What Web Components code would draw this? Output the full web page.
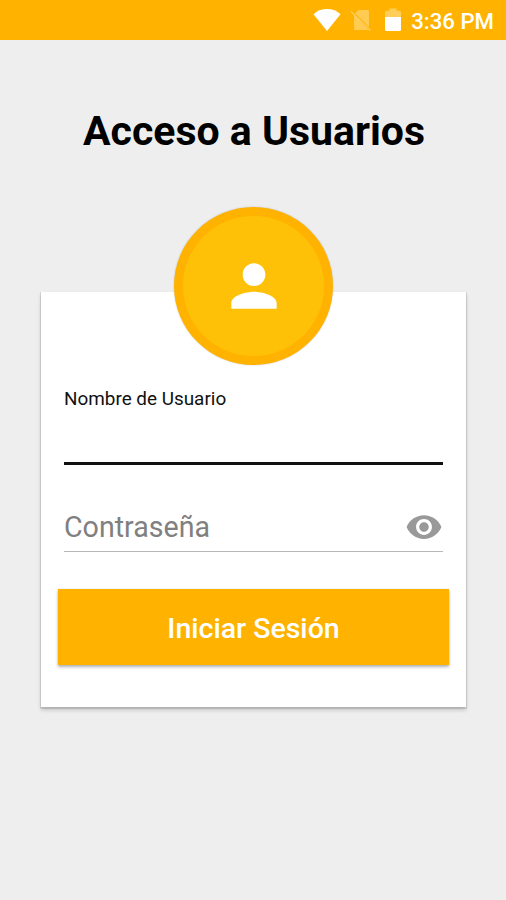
<!DOCTYPE html>
<html lang="es">
<head>
<meta charset="utf-8">
<title>Acceso a Usuarios</title>
<style>
  body {
    margin: 0;
    background: #eeeeee;
    font-family: Roboto, "Liberation Sans", sans-serif;
  }
</style>
</head>
<body>
<login-screen></login-screen>

<script>
const statusBarTemplate = document.createElement("template");

statusBarTemplate.innerHTML = `
  <svg class="wifi" width="28" height="22" viewBox="0 0 28 22">
    <path fill="#fff" d="M14 22L.5 5.300C4 1.800 8.800 0 14 0s10 1.800 13.500 5.300z"/>
  </svg>
  <svg class="sim" width="22" height="22" viewBox="0 0 22 22">
    <path fill="#fff" fill-opacity=".32" d="M8.500 1H17.500a1.500 1.500 0 0 1 1.500 1.500V18L5 4.300zM4 6L18.500 21H5.500a1.500 1.500 0 0 1-1.500-1.500z"/>
    <path stroke="#fff" stroke-opacity=".32" stroke-width="1.500" d="M.8 2.500L20.500 21.500"/>
  </svg>
  <svg class="battery" width="16" height="24" viewBox="0 0 16 24">
    <path fill="#fff" fill-opacity=".35" d="M0 9V4.200A1.500 1.500 0 0 1 1.500 2.700H4.500V.5h7V2.700h3A1.500 1.500 0 0 1 16 4.200V9z"/>
    <path fill="#fff" d="M0 9h16v12.500a1.500 1.500 0 0 1-1.500 1.500h-13A1.500 1.500 0 0 1 0 21.500z"/>
  </svg>
  <span><slot></slot></span>

  <style>
    :host {
      display: flex;
      align-items: center;
      justify-content: flex-end;
      box-sizing: border-box;
      height: 40px;
      padding-right: 12px;
      background-color: #ffb300;
      color: #fff;
    }

    .sim {
      margin-left: 9px;
    }

    .battery {
      margin: 0 10px 0 13px;
    }

    span {
      font-size: 22.200px;
      font-weight: 500;
      line-height: 38px;
      padding-top: 2px;
    }
  </style>
`;

class StatusBar extends HTMLElement {
  connectedCallback() {
    this.attachShadow({ mode: "open" });
    this.shadowRoot.appendChild(statusBarTemplate.content.cloneNode(true));
  }
}

window.customElements.define("status-bar", StatusBar);

const userAvatarTemplate = document.createElement("template");

userAvatarTemplate.innerHTML = `
  <svg width="68" height="68" viewBox="0 0 24 24">
    <path fill="#fff" d="M12 12c2.210 0 4-1.790 4-4s-1.790-4-4-4-4 1.790-4 4 1.790 4 4 4zm0 2c-2.670 0-8 1.340-8 4v2h16v-2c0-2.660-5.330-4-8-4z"/>
  </svg>

  <style>
    :host {
      display: flex;
      align-items: center;
      justify-content: center;
      box-sizing: border-box;
      width: 159px;
      height: 158px;
      border: 9px solid #ffb300;
      border-radius: 50%;
      background-color: #ffc107;
      box-shadow: 0 0 2px rgba(0, 0, 0, 0.2);
    }
  </style>
`;

class UserAvatar extends HTMLElement {
  connectedCallback() {
    this.attachShadow({ mode: "open" });
    this.shadowRoot.appendChild(userAvatarTemplate.content.cloneNode(true));
  }
}

window.customElements.define("user-avatar", UserAvatar);

const textFieldTemplate = document.createElement("template");

textFieldTemplate.innerHTML = `
  <label><slot></slot></label>
  <slot name="icon"></slot>

  <style>
    :host {
      display: flex;
      align-items: center;
      justify-content: space-between;
      box-sizing: border-box;
      height: 49px;
      border-bottom: 1.500px solid #b8b8b8;
      color: #808080;
    }

    label {
      font-size: 28.600px;
      line-height: 48px;
    }

    :host([focused]) {
      align-items: flex-start;
      height: 80px;
      border-bottom: 3px solid #111;
      color: #111;
    }

    :host([focused]) label {
      font-size: 18.900px;
      line-height: 28px;
    }
  </style>
`;

class TextField extends HTMLElement {
  connectedCallback() {
    this.attachShadow({ mode: "open" });
    this.shadowRoot.appendChild(textFieldTemplate.content.cloneNode(true));
  }
}

window.customElements.define("text-field", TextField);

const raisedButtonTemplate = document.createElement("template");

raisedButtonTemplate.innerHTML = `
  <button type="button"><slot></slot></button>

  <style>
    :host {
      display: block;
    }

    button {
      display: block;
      width: 100%;
      height: 76px;
      margin: 0;
      padding: 2px 0 0;
      border: 0;
      background-color: #ffb300;
      box-shadow: 0 2px 3px rgba(0, 0, 0, 0.3), 0 0 1px rgba(0, 0, 0, 0.15);
      color: #fff;
      font-family: inherit;
      font-size: 28.500px;
      font-weight: 500;
    }
  </style>
`;

class RaisedButton extends HTMLElement {
  connectedCallback() {
    this.attachShadow({ mode: "open" });
    this.shadowRoot.appendChild(raisedButtonTemplate.content.cloneNode(true));
  }
}

window.customElements.define("raised-button", RaisedButton);

const loginScreenTemplate = document.createElement("template");

loginScreenTemplate.innerHTML = `
  <status-bar>3:36 PM</status-bar>
  <h1>Acceso a Usuarios</h1>
  <user-avatar></user-avatar>
  <main>
    <text-field focused>Nombre de Usuario</text-field>
    <text-field class="password">Contraseña
      <svg slot="icon" width="38" height="38" viewBox="0 0 24 24">
        <path fill="#999" d="M12 4.500C7 4.500 2.730 7.610 1 12c1.730 4.390 6 7.500 11 7.500s9.270-3.110 11-7.500c-1.730-4.390-6-7.500-11-7.500zM12 17c-2.760 0-5-2.240-5-5s2.240-5 5-5 5 2.240 5 5-2.240 5-5 5zm0-8c-1.660 0-3 1.340-3 3s1.340 3 3 3 3-1.340 3-3-1.340-3-3-3z"/>
      </svg>
    </text-field>
    <raised-button>Iniciar Sesión</raised-button>
  </main>

  <style>
    :host {
      display: flex;
      flex-direction: column;
      height: 900px;
      background-color: #eeeeee;
    }

    h1 {
      margin: 66px 0 0;
      padding-left: 2px;
      color: #000;
      font-size: 41px;
      font-weight: 700;
      line-height: 50px;
      text-align: center;
    }

    /* the avatar straddles the top edge of the card */
    user-avatar {
      z-index: 1;
      margin: 51px 0 -73px 174px;
    }

    main {
      display: flex;
      flex-direction: column;
      box-sizing: border-box;
      width: 425px;
      height: 415px;
      margin-left: 41px;
      padding: 93px 17px 0;
      background-color: #fff;
      box-shadow: 0 3px 4px rgba(0, 0, 0, 0.18), 0 1px 0 1px rgba(0, 0, 0, 0.1);
    }

    text-field {
      margin: 0 6px;
    }

    .password {
      margin-top: 38px;
    }

    svg {
      display: block;
    }

    raised-button {
      margin-top: 37px;
    }
  </style>
`;

class LoginScreen extends HTMLElement {
  connectedCallback() {
    this.attachShadow({ mode: "open" });
    this.shadowRoot.appendChild(loginScreenTemplate.content.cloneNode(true));
  }
}

window.customElements.define("login-screen", LoginScreen);
</script>
</body>
</html>
